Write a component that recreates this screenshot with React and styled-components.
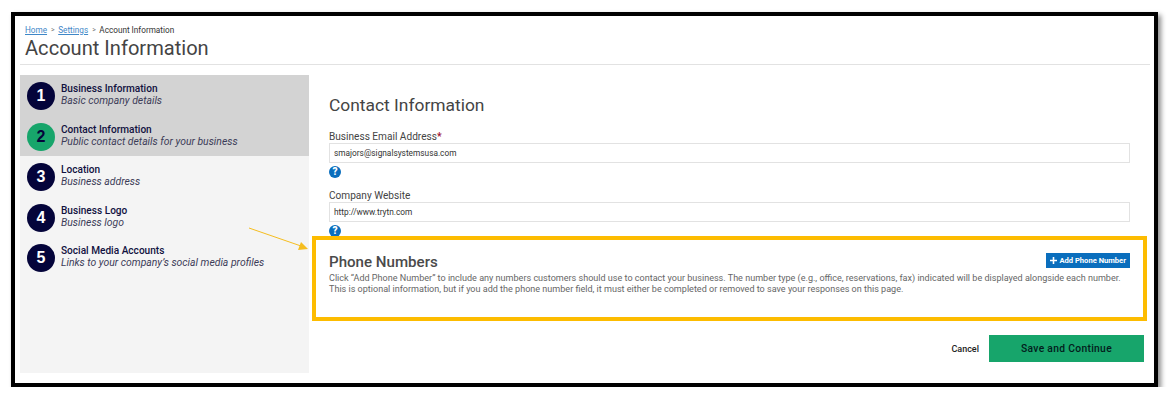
import styled, { createGlobalStyle } from 'styled-components';

const GlobalStyle = createGlobalStyle`
  html, body {
    margin: 0;
    padding: 0;
    background: #fff;
    font-family: Roboto, "Liberation Sans", sans-serif;
  }
  * {
    box-sizing: border-box;
  }
`;

const steps = [
  { num: 1, title: 'Business Information', sub: 'Basic company details', active: true },
  { num: 2, title: 'Contact Information', sub: 'Public contact details for your business', active: true, current: true },
  { num: 3, title: 'Location', sub: 'Business address' },
  { num: 4, title: 'Business Logo', sub: 'Business logo' },
  { num: 5, title: 'Social Media Accounts', sub: 'Links to your company’s social media profiles' },
];

const HelpIcon = () => (
  <HelpBadge>?</HelpBadge>
);

const App = () => {
  return (
    <Frame>
      <GlobalStyle />
      <Header>
        <Crumbs>
          <a href="#home">Home</a>
          <Sep>&gt;</Sep>
          <a href="#settings">Settings</a>
          <Sep>&gt;</Sep>
          <span>Account Information</span>
        </Crumbs>
        <PageTitle>Account Information</PageTitle>
      </Header>
      <Body>
        <Sidebar>
          {steps.map((step) => (
            <Step key={step.num} $active={step.active}>
              <StepNum $current={step.current}>{step.num}</StepNum>
              <StepText>
                <StepTitle>{step.title}</StepTitle>
                <StepSub>{step.sub}</StepSub>
              </StepText>
            </Step>
          ))}
        </Sidebar>
        <Main>
          <FormArea>
            <SectionTitle>Contact Information</SectionTitle>
            <Field>
              <Label>Business Email Address<Required>*</Required></Label>
              <Input readOnly value="smajors@signalsystemsusa.com" />
              <HelpIcon />
            </Field>
            <Field>
              <Label>Company Website</Label>
              <Input readOnly value="http://www.trytn.com" />
              <HelpIcon />
            </Field>
          </FormArea>
          <PhoneBox>
            <PhoneHead>
              <PhoneTitle>Phone Numbers</PhoneTitle>
              <AddButton>
                <svg width="7" height="7" viewBox="0 0 8 8">
                  <path d="M4 0v8M0 4h8" stroke="#fff" strokeWidth="1.8" />
                </svg>
                Add Phone Number
              </AddButton>
            </PhoneHead>
            <PhoneText>
              Click “Add Phone Number” to include any numbers customers should use to contact your business. The number type (e.g., office, reservations, fax) indicated will be displayed alongside each number.
              <br />
              This is optional information, but if you add the phone number field, it must either be completed or removed to save your responses on this page.
            </PhoneText>
          </PhoneBox>
          <Actions>
            <CancelLink>Cancel</CancelLink>
            <SaveButton>Save and Continue</SaveButton>
          </Actions>
        </Main>
      </Body>
      <Arrow width="62" height="24" viewBox="0 0 62 24">
        <path d="M0 1L52 19" stroke="#f5bd1f" strokeWidth="1" fill="none" />
        <path d="M59 22L49 23L52 15Z" fill="#f5bd1f" />
      </Arrow>
    </Frame>
  );
};

const Frame = styled.div`
  position: relative;
  width: 1147px;
  height: 375px;
  margin: 12px 0 0 11px;
  padding: 6px 4px 0 5px;
  background: #fff;
  border: 4px solid #000;
  box-shadow: 3px 3px 5px rgba(0, 0, 0, 0.45);
`;

const Header = styled.header`
  height: 43px;
  border-bottom: 1px solid #e2e2e2;
  padding-left: 5px;
`;

const Crumbs = styled.div`
  display: flex;
  align-items: center;
  height: 15px;
  font-size: 8.2px;
  color: #333;

  a {
    color: #3f87c7;
    text-decoration: underline;
  }
`;

const Sep = styled.span`
  margin: 0 3.5px 0 4px;
  color: #777;
  font-size: 7px;
`;

const PageTitle = styled.h1`
  margin: 0;
  font-size: 20.1px;
  line-height: 22px;
  font-weight: 400;
  color: #444;
`;

const Body = styled.div`
  display: flex;
  margin-top: 10px;
`;

const Sidebar = styled.nav`
  width: 289px;
  height: 298px;
  flex: none;
  background: #f4f4f4;
`;

const Step = styled.div`
  display: flex;
  height: 40.5px;
  padding: 7px 0 0 7px;
  background: ${(p) => (p.$active ? '#d3d3d3' : 'transparent')};
`;

const StepNum = styled.div`
  flex: none;
  width: 28px;
  height: 28px;
  border-radius: 50%;
  display: flex;
  align-items: center;
  justify-content: center;
  font-size: 16px;
  font-weight: 700;
  font-family: "Liberation Sans", Arial, sans-serif;
  background: ${(p) => (p.$current ? '#17a56b' : '#04043a')};
  color: ${(p) => (p.$current ? '#04043a' : '#fff')};
`;

const StepText = styled.div`
  margin-left: 6px;
  margin-top: 1px;
`;

const StepTitle = styled.div`
  font-size: 10.1px;
  line-height: 12px;
  font-weight: 500;
  color: #11113f;
`;

const StepSub = styled.div`
  font-size: 10.4px;
  line-height: 12px;
  font-style: italic;
  color: #3c3c58;
`;

const Main = styled.main`
  flex: 1;
  display: flex;
  flex-direction: column;
  padding-left: 3px;
`;

const FormArea = styled.div`
  padding: 19px 20px 0 17px;
  height: 161px;
`;

const SectionTitle = styled.h2`
  margin: 0 0 14px;
  font-size: 17.4px;
  line-height: 22px;
  font-weight: 400;
  color: #444;
`;

const Field = styled.div`
  margin-bottom: 11.5px;
`;

const Label = styled.label`
  display: block;
  font-size: 10.1px;
  line-height: 13px;
  color: #444;
`;

const Required = styled.span`
  color: #a01030;
  font-weight: 700;
`;

const Input = styled.input`
  display: block;
  width: 100%;
  height: 20px;
  padding: 0 4px;
  border: 1px solid #e2e2e2;
  background: #fff;
  font-family: inherit;
  font-size: 8.3px;
  color: #333;
  outline: none;
`;

const HelpBadge = styled.span`
  display: flex;
  align-items: center;
  justify-content: center;
  width: 12px;
  height: 12px;
  margin-top: 2.5px;
  border-radius: 50%;
  background: #0a6ebd;
  color: #fff;
  font-size: 10px;
  font-weight: 900;
  line-height: 12px;
`;

const PhoneBox = styled.section`
  height: 85px;
  width: 835px;
  border: 4px solid #fdbc00;
  padding: 11px 13px 0 13px;
`;

const PhoneHead = styled.div`
  display: flex;
  justify-content: space-between;
  align-items: flex-start;
  height: 19px;
`;

const PhoneTitle = styled.h3`
  margin: 0;
  font-size: 15.1px;
  line-height: 22px;
  font-weight: 500;
  color: #4a4a4a;
`;

const AddButton = styled.button`
  display: flex;
  align-items: center;
  gap: 2px;
  height: 15px;
  margin-top: 2px;
  padding: 0 4px;
  border: none;
  border-radius: 0;
  background: #0a6ebd;
  color: #fff;
  font-family: inherit;
  font-size: 7.6px;
  font-weight: 700;
`;

const PhoneText = styled.p`
  margin: 3px 0 0;
  font-size: 9.05px;
  line-height: 10.7px;
  color: #666;
  white-space: nowrap;
`;

const Actions = styled.div`
  display: flex;
  justify-content: flex-end;
  align-items: center;
  gap: 10px;
  margin-top: 14px;
  padding-right: 6px;
`;

const CancelLink = styled.span`
  font-size: 9px;
  font-weight: 500;
  color: #222;
`;

const SaveButton = styled.button`
  width: 155px;
  height: 27px;
  border: none;
  background: #17a56b;
  color: #031c1c;
  font-family: inherit;
  font-size: 10.3px;
  font-weight: 500;
  letter-spacing: 0.3px;
`;

const Arrow = styled.svg`
  position: absolute;
  left: 234px;
  top: 211px;
`;

export default App;
